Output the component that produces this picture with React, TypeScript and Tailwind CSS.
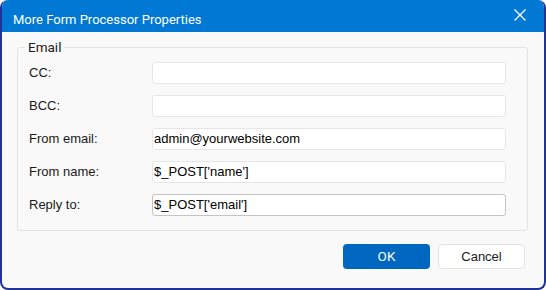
import React from "react";

const FIELDS: { label: string; value: string; focused?: boolean }[] = [
  { label: "CC:", value: "" },
  { label: "BCC:", value: "" },
  { label: "From email:", value: "admin@yourwebsite.com" },
  { label: "From name:", value: "$_POST['name']" },
  { label: "Reply to:", value: "$_POST['email']", focused: true },
];

export default function App() {
  return (
    <div className="flex h-[290px] w-[546px] flex-col overflow-hidden rounded-[8px] border-2 border-t-0 border-[#1f3399] bg-[#f9f9f9]">
      {/* Title bar */}
      <div className="flex h-[32px] shrink-0 items-center justify-between bg-[#0078d4] pl-[11px] pr-[18px] text-white">
        <span className="pt-[7px] text-[13px] [font-family:Roboto,sans-serif]">More Form Processor Properties</span>
        <svg width="12" height="12" viewBox="0 0 12 12" className="mt-[-2px]">
          <path d="M0.5 0.5 L11.5 11.5 M11.5 0.5 L0.5 11.5" stroke="white" strokeWidth="1.4" fill="none" />
        </svg>
      </div>

      {/* Body */}
      <div className="flex flex-1 flex-col pl-[15px] pr-[16px] pt-[7px]">
        <fieldset className="rounded-[3px] border border-[#e3e3e3] pb-[14px] pl-[11px] pr-[21px] pt-[7px]">
          <legend className="-ml-[4px] px-[3px] text-[13.5px] leading-[16px] text-[#1a1a1a] [font-family:Roboto,sans-serif]">
            Email
          </legend>
          <div className="flex flex-col gap-[11px]">
            {FIELDS.map((f) => (
              <div key={f.label} className="flex items-center">
                <label className="w-[123px] shrink-0 text-[13px] text-[#1a1a1a] [font-family:'Liberation_Sans',sans-serif]">
                  {f.label}
                </label>
                <div
                  className={
                    "flex h-[22px] flex-1 items-center rounded-[3px] border bg-white pl-[1px] text-[13px] text-black [font-family:'Liberation_Sans',sans-serif] " +
                    (f.focused ? "border-[#c4c4c4]" : "border-[#e6e6e6]")
                  }
                >
                  {f.value}
                </div>
              </div>
            ))}
          </div>
        </fieldset>

        {/* Buttons */}
        <div className="mt-[13px] flex justify-end gap-[8px] pr-[3px]">
          <button className="h-[25px] w-[87px] rounded-[4px] bg-[#0067c0] text-[13.5px] text-white [font-family:Roboto,sans-serif]">
            OK
          </button>
          <button className="h-[25px] w-[87px] rounded-[4px] border border-[#e3e3e3] bg-white text-[13px] text-[#1a1a1a] [font-family:'Liberation_Sans',sans-serif]">
            Cancel
          </button>
        </div>
      </div>
    </div>
  );
}
